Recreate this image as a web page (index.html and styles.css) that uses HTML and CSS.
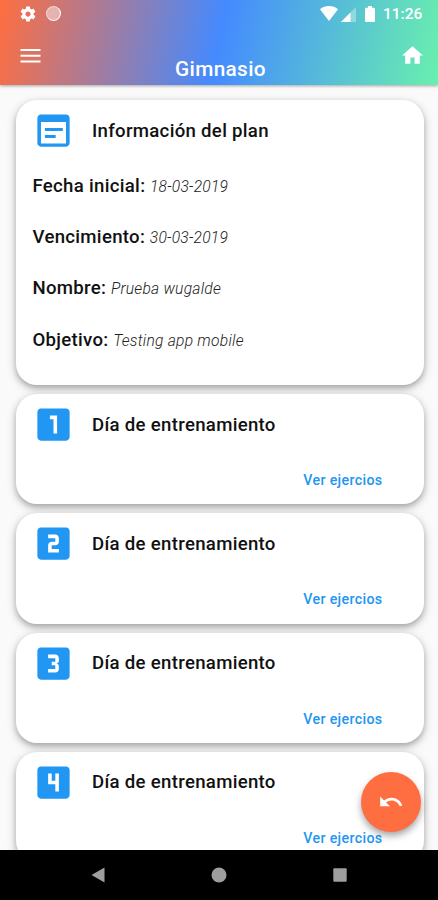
FILE: index.html
```html
<!DOCTYPE html>
<html lang="es">
<head>
    <meta charset="UTF-8">
    <meta name="viewport" content="width=device-width, initial-scale=1.0">
    <title>Gimnasio</title>
    <link rel="stylesheet" href="styles.css">
</head>
<body>
    <div class="screen">
        <header class="header">
            <div class="status-bar">
                <svg class="gear" viewBox="0 0 24 24"><path d="M19.43 12.98c.04-.32.07-.64.07-.98s-.03-.66-.07-.98l2.11-1.65c.19-.15.24-.42.12-.64l-2-3.46c-.12-.22-.39-.3-.61-.22l-2.49 1c-.52-.4-1.08-.73-1.69-.98l-.38-2.65C14.46 2.18 14.25 2 14 2h-4c-.25 0-.46.18-.49.42l-.38 2.65c-.61.25-1.17.59-1.69.98l-2.49-1c-.23-.09-.49 0-.61.22l-2 3.46c-.13.22-.07.49.12.64l2.11 1.65c-.04.32-.07.65-.07.98s.03.66.07.98l-2.11 1.65c-.19.15-.24.42-.12.64l2 3.46c.12.22.39.3.61.22l2.49-1c.52.4 1.08.73 1.69.98l.38 2.65c.03.24.24.42.49.42h4c.25 0 .46-.18.49-.42l.38-2.65c.61-.25 1.17-.59 1.69-.98l2.49 1c.23.09.49 0 .61-.22l2-3.46c.12-.22.07-.49-.12-.64l-2.11-1.65zM12 15.5c-1.93 0-3.5-1.57-3.5-3.5s1.57-3.5 3.5-3.5 3.5 1.57 3.5 3.5-1.57 3.5-3.5 3.5z"/></svg>
                <span class="sync"></span>
                <svg class="wifi" viewBox="0 0 18 15"><path d="M0 3.2C5 -1 13 -1 18 3.2L9 15z"/></svg>
                <svg class="signal" viewBox="0 0 15 15"><path fill-opacity=".35" d="M0 15 15 0v15z"/><path d="M0 15 9.5 5.5V15z"/></svg>
                <svg class="battery" viewBox="0 0 10 16"><path d="M3 0h4v1.700h1.700C9.400 1.700 10 2.300 10 3v11.700c0 .7-.6 1.300-1.300 1.300H1.300C.6 16 0 15.400 0 14.700V3c0-.7.6-1.300 1.300-1.300H3z"/></svg>
                <span class="clock">11:26</span>
            </div>
            <div class="toolbar">
                <svg class="menu" viewBox="0 0 20 14"><path d="M0 0h20v2H0zM0 5.800h20v2H0zM0 11.500h20v2H0z"/></svg>
                <h1>Gimnasio</h1>
                <svg class="home" viewBox="0 0 24 24"><path d="M10 20v-6h4v6h5v-8h3L12 3 2 12h3v8z"/></svg>
            </div>
        </header>

        <main class="list">
            <section class="card plan">
                <div class="card-head">
                    <svg viewBox="0 0 24 24"><path d="M17.200 10.600H7.200v1.700h10zM19 3H5c-1.110 0-2 .9-2 2v14c0 1.100.89 2 2 2h14c1.100 0 2-.9 2-2V5c0-1.100-.9-2-2-2zm0 16.200H5V7.200h14zM13.200 14.500h-6v1.700h6z"/></svg>
                    <h2>Información del plan</h2>
                </div>
                <p><b>Fecha inicial:</b> <i>18-03-2019</i></p>
                <p><b>Vencimiento:</b> <i>30-03-2019</i></p>
                <p><b>Nombre:</b> <i>Prueba wugalde</i></p>
                <p><b>Objetivo:</b> <i>Testing app mobile</i></p>
            </section>

            <section class="card day">
                <div class="card-head">
                    <svg viewBox="0 0 24 24"><path d="M19 3H5c-1.100 0-2 .9-2 2v14c0 1.100.9 2 2 2h14c1.100 0 2-.9 2-2V5c0-1.100-.9-2-2-2zm-5 14h-2V9h-2V7h4v10z"/></svg>
                    <h2>Día de entrenamiento</h2>
                </div>
                <a class="link">Ver ejercios</a>
            </section>

            <section class="card day">
                <div class="card-head">
                    <svg viewBox="0 0 24 24"><path d="M19 3H5c-1.100 0-2 .9-2 2v14c0 1.100.9 2 2 2h14c1.100 0 2-.9 2-2V5c0-1.100-.9-2-2-2zm-4 8c0 1.110-.9 2-2 2h-2v2h4v2H9v-4c0-1.110.9-2 2-2h2V9H9V7h4c1.100 0 2 .89 2 2v2z"/></svg>
                    <h2>Día de entrenamiento</h2>
                </div>
                <a class="link">Ver ejercios</a>
            </section>

            <section class="card day">
                <div class="card-head">
                    <svg viewBox="0 0 24 24"><path d="M19 3H5c-1.100 0-2 .9-2 2v14c0 1.100.9 2 2 2h14c1.100 0 2-.9 2-2V5c0-1.100-.9-2-2-2zm-4 7.500c0 .83-.67 1.500-1.500 1.500.83 0 1.500.67 1.500 1.500V15c0 1.110-.9 2-2 2H9v-2h4v-2h-2v-2h2V9H9V7h4c1.100 0 2 .89 2 2v1.500z"/></svg>
                    <h2>Día de entrenamiento</h2>
                </div>
                <a class="link">Ver ejercios</a>
            </section>

            <section class="card day">
                <div class="card-head">
                    <svg viewBox="0 0 24 24"><path d="M19 3H5c-1.100 0-2 .9-2 2v14c0 1.100.9 2 2 2h14c1.100 0 2-.9 2-2V5c0-1.100-.9-2-2-2zm-4 14h-2v-4H9V7h2v4h2V7h2v10z"/></svg>
                    <h2>Día de entrenamiento</h2>
                </div>
                <a class="link">Ver ejercios</a>
            </section>

            <button class="fab" aria-label="Volver">
                <svg viewBox="0 0 24 24"><path d="M12.500 8c-2.650 0-5.050.99-6.900 2.600L2 7v9h9l-3.620-3.620c1.390-1.160 3.160-1.880 5.120-1.880 3.540 0 6.550 2.310 7.600 5.500l2.370-.78C21.080 11.030 17.150 8 12.500 8z"/></svg>
            </button>
        </main>

        <nav class="nav-bar">
            <svg viewBox="0 0 14 16"><path d="M13.500 .5v15L.5 8z"/></svg>
            <svg viewBox="0 0 16 16"><circle cx="8" cy="8" r="7.500"/></svg>
            <svg viewBox="0 0 14 14"><rect x=".3" y=".3" width="13.400" height="13.400" rx="1"/></svg>
        </nav>
    </div>
</body>
</html>
```
FILE: styles.css
```css
* {
    box-sizing: border-box;
}
body {
    margin: 0;
    font-family: Roboto, "Noto Sans", sans-serif;
    background-color: #fafafa;
}
h1, h2, p {
    margin: 0;
}
.screen {
    display: flex;
    flex-direction: column;
    height: 900px;
    overflow: hidden;
}
.header {
    position: relative;
    z-index: 1;
    height: 85px;
    flex: none;
    color: #fff;
    background: linear-gradient(101deg, #ff6e40, #448aff 50%, #69f0ae);
    box-shadow: 0 1px 3px rgba(0,0,0,0.35);
}
.header svg {
    fill: #fff;
    flex: none;
}
.status-bar {
    display: flex;
    align-items: center;
    height: 27px;
    padding: 0 17px 0 19px;
}
.gear {
    width: 18px;
    height: 18px;
}
.sync {
    width: 15px;
    height: 15px;
    margin-left: 9px;
    border-radius: 50%;
    background-color: rgba(255,255,255,0.45);
    border: 1px solid rgba(255,255,255,0.45);
    border-right-color: #fff;
    border-bottom-color: rgba(255,255,255,0.85);
}
.wifi {
    width: 18px;
    height: 15px;
    margin-left: auto;
}
.signal {
    width: 15px;
    height: 15px;
    margin: 1px 0 0 3px;
}
.battery {
    width: 10px;
    height: 16px;
    margin: 0 8px 0 9px;
}
.clock {
    font-size: 15.500px;
    font-weight: 500;
    line-height: 18px;
    width: 38px;
    white-space: nowrap;
}
.toolbar {
    display: flex;
    justify-content: space-between;
    height: 58px;
    padding: 0 13px 0 20px;
}
.menu {
    width: 21px;
    height: 14px;
    margin-top: 22px;
}
.toolbar h1 {
    margin: 29px 0 0;
    font-size: 20.800px;
    font-weight: 500;
    line-height: 26px;
    letter-spacing: 0.35px;
}
.home {
    width: 25px;
    height: 25px;
    margin-top: 16px;
}
.list {
    position: relative;
    flex: 1;
    min-height: 0;
    overflow: hidden;
    padding: 15px 14.500px 0 15.500px;
}
.card {
    background: #fff;
    border-radius: 21px;
    margin-bottom: 9px;
    box-shadow: 0 3px 10px rgba(0,0,0,0.26), 0 3px 5px rgba(0,0,0,0.14);
}
.plan {
    height: 285px;
}
.day {
    height: 110.300px;
}
.card-head {
    display: flex;
    align-items: center;
    gap: 17px;
    height: 61px;
    padding-left: 16.500px;
}
.card-head svg {
    width: 43px;
    height: 43px;
    fill: #2196f3;
}
.card-head h2 {
    font-size: 18.600px;
    font-weight: 500;
    line-height: 24px;
    letter-spacing: 0.300px;
    color: #111;
}
.plan p {
    padding-left: 17px;
    height: 51.200px;
    line-height: 50px;
    font-size: 18.600px;
    color: #111;
}
.plan b {
    font-weight: 500;
    letter-spacing: 0.300px;
}
.plan i {
    font-size: 15.600px;
    font-weight: 300;
    letter-spacing: 0.250px;
    color: #222;
}
.day .link {
    display: block;
    margin: 15px 41px 0 0;
    text-align: right;
    font-size: 14.200px;
    font-weight: 500;
    line-height: 20px;
    letter-spacing: 0.350px;
    color: #2196f3;
}
.fab {
    position: absolute;
    right: 17px;
    bottom: 17.500px;
    width: 60px;
    height: 60px;
    padding: 0;
    border: none;
    border-radius: 50%;
    background-color: #ff6e40;
    box-shadow: 0 4px 7px rgba(0,0,0,0.35);
    display: flex;
    align-items: center;
    justify-content: center;
}
.fab svg {
    width: 26px;
    height: 26px;
    fill: #fff;
}
.nav-bar {
    display: flex;
    align-items: center;
    justify-content: space-between;
    height: 50.500px;
    flex: none;
    padding: 0 91px;
    background-color: #000;
}
.nav-bar svg {
    height: 16px;
    width: 14px;
    fill: #9e9e9e;
}
.nav-bar svg:nth-child(2) {
    width: 16px;
}
```
